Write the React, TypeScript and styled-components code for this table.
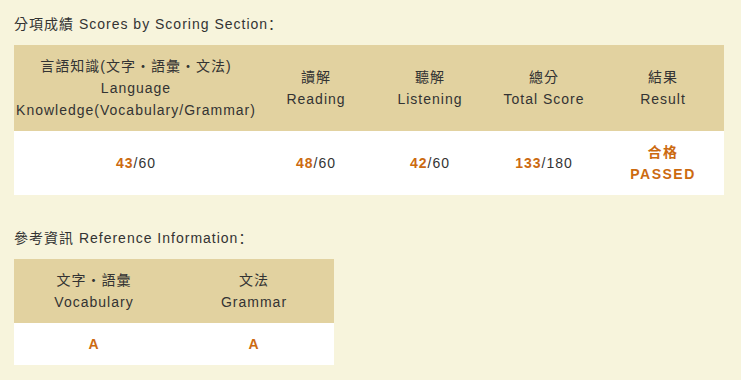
import * as React from "react";
import styled, { createGlobalStyle } from "styled-components";

const GlobalStyle = createGlobalStyle`
  html, body {
    margin: 0;
    padding: 0;
    background: #f7f4dc;
  }
  body {
    font-family: "Liberation Sans", "Noto Sans CJK TC", sans-serif;
    color: #333333;
    font-size: 14px;
    letter-spacing: 1px;
  }
`;

const Page = styled.div`
  padding: 13px 14px 0 14px;
`;

const Section = styled.section`
  margin-bottom: 32px;
`;

const Heading = styled.h3`
  margin: 0 0 10px 0;
  height: 22px;
  font-size: 14px;
  font-weight: normal;
  line-height: 22px;
  color: #333333;
`;

const Colon = styled.span`
  font-family: "Noto Sans CJK SC", sans-serif;
  line-height: 1;
`;

const Table = styled.table<{ $width: number }>`
  width: ${(p) => p.$width}px;
  border-collapse: collapse;
  table-layout: fixed;
`;

const HeadCell = styled.th<{ $width?: number }>`
  background: #e2d2a0;
  font-weight: normal;
  line-height: 22px;
  padding: 10px 0;
  text-align: center;
  vertical-align: middle;
  width: ${(p) => (p.$width ? `${p.$width}px` : "auto")};
`;

const BodyCell = styled.td`
  background: #ffffff;
  line-height: 22px;
  padding: 10px 0;
  text-align: center;
  vertical-align: middle;
`;

const Score = styled.span`
  color: #cc6a10;
  font-weight: bold;
`;

const Passed = styled.div`
  color: #cc6a10;
  font-weight: bold;
  letter-spacing: 1.5px;
`;

type Col = { zh: string; en: React.ReactNode; width: number };

const scoreCols: Col[] = [
  {
    zh: "言語知識(文字・語彙・文法)",
    en: (
      <>
        Language
        <br />
        Knowledge(Vocabulary/Grammar)
      </>
    ),
    width: 244,
  },
  { zh: "讀解", en: "Reading", width: 116 },
  { zh: "聽解", en: "Listening", width: 112 },
  { zh: "總分", en: "Total Score", width: 116 },
  { zh: "結果", en: "Result", width: 122 },
];

const scores = [
  { got: 43, max: 60 },
  { got: 48, max: 60 },
  { got: 42, max: 60 },
  { got: 133, max: 180 },
];

const refCols: Col[] = [
  { zh: "文字・語彙", en: "Vocabulary", width: 160 },
  { zh: "文法", en: "Grammar", width: 160 },
];

function HeaderRow({ cols }: { cols: Col[] }) {
  return (
    <tr>
      {cols.map((c) => (
        <HeadCell key={c.zh} $width={c.width}>
          {c.zh}
          <br />
          {c.en}
        </HeadCell>
      ))}
    </tr>
  );
}

export default function App() {
  return (
    <Page>
      <GlobalStyle />
      <Section>
        <Heading>
          分項成績 Scores by Scoring Section<Colon>：</Colon>
        </Heading>
        <Table $width={710}>
          <thead>
            <HeaderRow cols={scoreCols} />
          </thead>
          <tbody>
            <tr>
              {scores.map((s, i) => (
                <BodyCell key={i}>
                  <Score>{s.got}</Score>/{s.max}
                </BodyCell>
              ))}
              <BodyCell>
                <Passed>
                  合格
                  <br />
                  PASSED
                </Passed>
              </BodyCell>
            </tr>
          </tbody>
        </Table>
      </Section>
      <Section>
        <Heading>
          參考資訊 Reference Information<Colon>：</Colon>
        </Heading>
        <Table $width={320}>
          <thead>
            <HeaderRow cols={refCols} />
          </thead>
          <tbody>
            <tr>
              <BodyCell>
                <Score>A</Score>
              </BodyCell>
              <BodyCell>
                <Score>A</Score>
              </BodyCell>
            </tr>
          </tbody>
        </Table>
      </Section>
    </Page>
  );
}
